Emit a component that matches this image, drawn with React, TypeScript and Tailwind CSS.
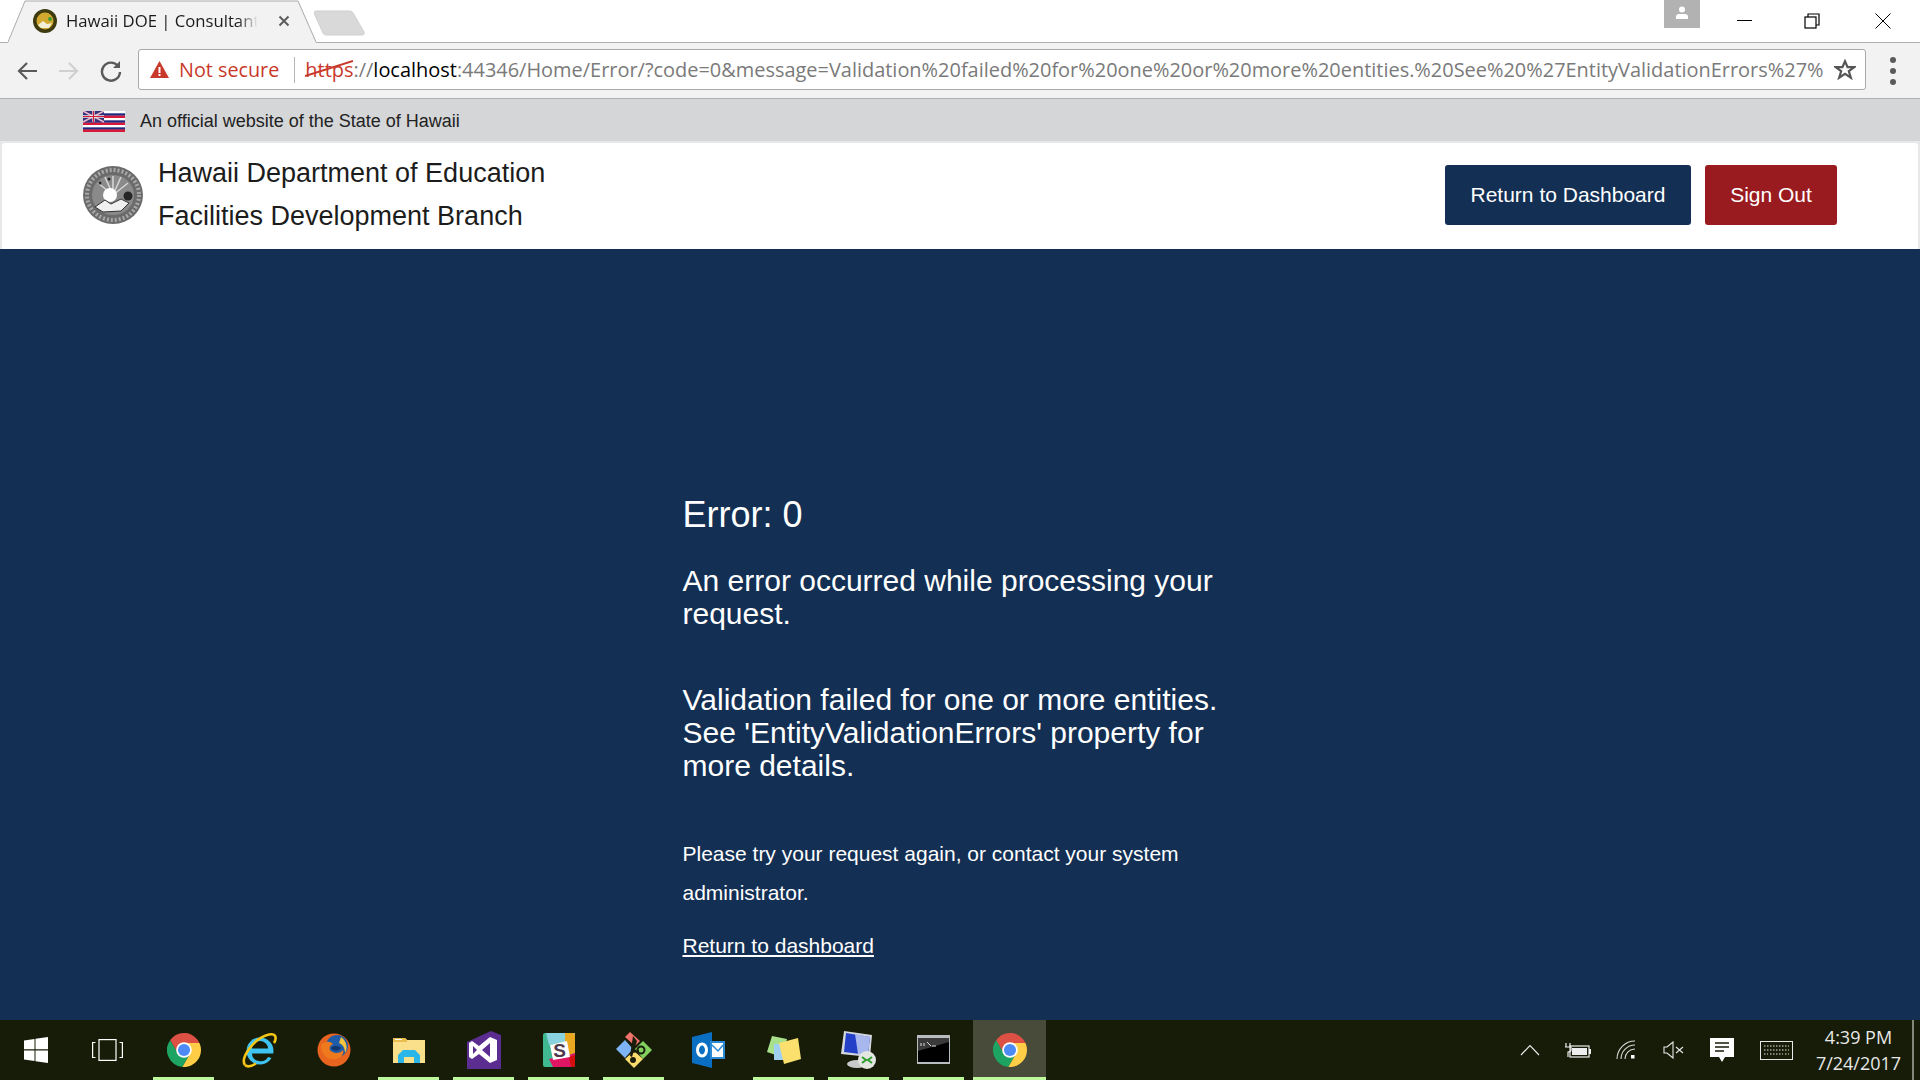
import React from 'react'

const sans = { fontFamily: '"Liberation Sans", Arial, sans-serif' }

function ChromeLogo({ size = 34 }: { size?: number }) {
    return (
        <svg width={size} height={size} viewBox="-24 -24 48 48">
            <path d="M0 -10H21.8A24 24 0 0 0 -19.56 -13.9L-8.66 5Z" fill="#dd5144" />
            <path d="M-8.66 5L-19.56 -13.9A24 24 0 0 0 -2.24 23.9L8.66 5Z" fill="#1da462" />
            <path d="M8.66 5L-2.24 23.9A24 24 0 0 0 21.8 -10H0Z" fill="#ffcd46" />
            <circle r="11" fill="#fff" />
            <circle r="8.6" fill="#4c8bf5" />
        </svg>
    )
}

function IeLogo() {
    return (
        <svg width="36" height="36" viewBox="0 0 36 36">
            <circle cx="19" cy="19" r="13.5" fill="#3ec3f2" />
            <path d="M11 16.5A8 7.5 0 0 1 27 16.5Z" fill="#161c07" />
            <path d="M11 21.5A8.5 8 0 0 0 27 25L34 27V21.5Z" fill="#161c07" />
            <path d="M4 33C-1 26 13 6 28 2.5 35 1 36 6 33 11" fill="none" stroke="#f5c518" strokeWidth="2.6" />
            <path d="M4 33C7 36 11 34 15 31.5" fill="none" stroke="#f5c518" strokeWidth="2.6" />
        </svg>
    )
}

function FirefoxLogo() {
    return (
        <svg width="34" height="34" viewBox="0 0 34 34">
            <circle cx="17" cy="17" r="16.5" fill="#e8641f" />
            <circle cx="20" cy="13" r="11" fill="#1f5ca8" />
            <path d="M24 4C30 8 31 16 28 20 28 14 25 11 22 10Z" fill="#f4c53c" />
            <path d="M4 12C4 24 14 29 22 25 26 23 27 19 26 17 23 21 16 21 13 17 12 14 14 12 16 11 13 8 8 8 4 12Z" fill="#ee7a1d" />
            <path d="M14 15C17 19 22 18 24 15 22 13 17 12 14 15Z" fill="#14366f" />
        </svg>
    )
}

function FolderLogo() {
    return (
        <svg width="32" height="28" viewBox="0 0 32 28">
            <path d="M0 2H12L14 4H32V27H0Z" fill="#fbe08c" />
            <path d="M0 2H12L14 4V6H0Z" fill="#e9bd4e" />
            <rect x="2" y="3" width="7" height="1" fill="#fff" />
            <path d="M5 27V19L10 14H22L27 19V27H21V21H11V27Z" fill="#2ab6e9" />
        </svg>
    )
}

function VsLogo() {
    return (
        <svg width="34" height="38" viewBox="0 0 34 38">
            <path d="M24 0L34 4V38H0V11Z" fill="#5c2d91" />
            <path d="M23 6L12 15 5 10 2 12V26L5 28 12 23 23 32 30 29V9Z" fill="#fff" />
            <path d="M23 12V26L15 19Z M6 15L10 19 6 23Z" fill="#5c2d91" />
        </svg>
    )
}

function SlackLogo() {
    return (
        <svg width="32" height="34" viewBox="0 0 32 34">
            <rect width="32" height="34" rx="2" fill="#3eb991" />
            <path d="M3 0H32V12L22 9 6 12Z" fill="#89d3df" />
            <path d="M22 0H30Q32 0 32 2V20L26 22 22 9Z" fill="#e9a820" />
            <path d="M6 26L26 22 32 20V32Q32 34 30 34H10Z" fill="#e01563" />
            <path d="M26 24L32 22V32Q32 34 30 34H28Z" fill="#d40e0d" />
            <path d="M7 12L24 8 27 24 10 27Z" fill="#fff" />
            <text x="16.5" y="24" textAnchor="middle" fontSize="19" fontWeight="700" fill="#4d394b" style={sans}>S</text>
        </svg>
    )
}

function GitLogo() {
    return (
        <svg width="36" height="36" viewBox="0 0 36 36">
            <path d="M0 17L9 8 17 17 9 26Z" fill="#7eb4f5" />
            <path d="M19 17L27 9 36 18 27 27Z" fill="#82d05e" />
            <path d="M9 27L18 19 27 27 18 36Z" fill="#fbdc6e" />
            <path d="M9 5L14 0 24 9 19 14Z" fill="#f0716a" />
            <path d="M17 4L21 9 16 25 14 24Z" fill="#1b1d0c" />
            <circle cx="25" cy="18" r="3.5" fill="none" stroke="#1b1d0c" strokeWidth="2" />
            <path d="M16 20L23 19" stroke="#1b1d0c" strokeWidth="2" />
            <circle cx="17" cy="28" r="3" fill="#1b1d0c" />
        </svg>
    )
}

function OutlookLogo() {
    return (
        <svg width="33" height="36" viewBox="0 0 33 36">
            <path d="M0 5L20 0V36L0 31Z" fill="#0a6fc2" />
            <ellipse cx="10" cy="18" rx="4.5" ry="6" fill="none" stroke="#fff" strokeWidth="3" />
            <rect x="18" y="9" width="15" height="18" fill="#2a8ad4" />
            <rect x="20" y="11" width="11" height="14" fill="#fff" />
            <path d="M20 13L26 19 31 13" fill="none" stroke="#2a8ad4" strokeWidth="1.5" />
        </svg>
    )
}

function StickyLogo() {
    return (
        <svg width="34" height="30" viewBox="0 0 34 30">
            <path d="M5 1L20 4 15 22 0 17Z" fill="#a8e08c" />
            <rect x="7" y="9" width="14" height="16" fill="#9fd0f2" />
            <path d="M12 8L31 3 34 24 17 29Z" fill="#fbe06d" />
        </svg>
    )
}

function RdpLogo() {
    return (
        <svg width="36" height="38" viewBox="0 0 36 38">
            <ellipse cx="16" cy="33" rx="10" ry="4" fill="#c9c9c9" />
            <path d="M3 0L31 4 29 26 0 23Z" fill="#d4d8de" />
            <path d="M5 2L29 6 27 24 3 21Z" fill="#2340c8" />
            <path d="M14 3L29 6 27 24 17 23Z" fill="#a8b8ee" />
            <circle cx="26" cy="29" r="9" fill="#e4e6e2" />
            <path d="M21 26L25 29 21 32M31 26L27 29 31 32" fill="none" stroke="#2f9e2f" strokeWidth="2" />
        </svg>
    )
}

function CmdLogo() {
    return (
        <svg width="33" height="29" viewBox="0 0 33 29">
            <rect width="33" height="29" fill="#b9bcbe" />
            <rect x="1" y="3" width="31" height="24" fill="#000" />
            <path d="M1 3H32V7L1 16Z" fill="#3a3a3a" />
            <path d="M4 8V11M7 8V11M10 7L14 11M15 11H19" stroke="#ddd" strokeWidth="1" fill="none" />
        </svg>
    )
}

function Seal() {
    return (
        <svg width="60" height="58" viewBox="0 0 60 58">
            <ellipse cx="30" cy="29" rx="30" ry="29" fill="#6b6b6b" />
            <ellipse cx="30" cy="29" rx="26" ry="25" fill="none" stroke="#a8a8a8" strokeWidth="4" strokeDasharray="2 2" />
            <ellipse cx="30" cy="29" rx="21" ry="20" fill="#8a8a8a" />
            <path d="M30 29V10M30 29L22 11M30 29L38 11M30 29L15 17M30 29L45 17" stroke="#d4d4d4" strokeWidth="1.6" />
            <circle cx="27" cy="29" r="7" fill="#fff" />
            <path d="M12 41L22 34 28 38 38 33 46 37 38 45 20 46Z" fill="#f0f0f0" stroke="#333" strokeWidth="1" />
            <circle cx="45" cy="30" r="4.5" fill="#262626" />
            <circle cx="17" cy="17" r="1.5" fill="#262626" />
            <circle cx="26" cy="13" r="1.5" fill="#262626" />
        </svg>
    )
}

function HawaiiFlag() {
    const stripes = ['#ffffff', '#1f2a80', '#d8193a', '#ffffff', '#1f2a80', '#d8193a', '#ffffff', '#1f2a80', '#d8193a']
    return (
        <svg width="42" height="21" viewBox="0 0 42 21">
            {stripes.map((color, i) => (
                <rect key={i} y={i * 2.34} width="42" height="2.4" fill={color} />
            ))}
            <rect y="18.6" width="42" height="2.4" fill="#d8193a" />
            <rect width="21" height="11" fill="#34307c" />
            <path d="M0 0L21 11M21 0L0 11" stroke="#e8b8c8" strokeWidth="1.6" />
            <path d="M10.5 0V11M0 5.5H21" stroke="#eee" strokeWidth="2.4" />
            <path d="M10.5 0V11M0 5.5H21" stroke="#d8193a" strokeWidth="1.2" />
        </svg>
    )
}

function Favicon() {
    return (
        <svg width="24" height="24" viewBox="0 0 24 24">
            <circle cx="12" cy="12" r="12" fill="#3d3a10" />
            <circle cx="12" cy="12" r="8.5" fill="#d2a92e" />
            <circle cx="17" cy="10" r="2" fill="#3f9a3a" />
            <path d="M5 16L10 12 14 15 19 14 16 19 8 19Z" fill="#f1efd8" />
        </svg>
    )
}

function TabStrip() {
    return (
        <div className="flex h-[42px] bg-white">
            <div className="relative ml-[8px] flex h-[42px] w-[310px] items-center">
                <svg className="absolute inset-0" width="310" height="43" viewBox="0 0 310 43">
                    <path d="M0 43L17 1H290L308 43Z" fill="#f2f2f2" />
                    <path d="M0 42L17 1H290L308 42" fill="none" stroke="#a9a9a9" />
                </svg>
                <div className="relative ml-[25px] flex items-center">
                    <Favicon />
                    <span
                        className="ml-[9px] w-[192px] text-[16.7px] whitespace-nowrap text-[#1b1b1b]"
                        style={{ fontFamily: '"Open Sans", sans-serif', maskImage: 'linear-gradient(90deg, #000 172px, transparent 192px)' }}
                    >
                        Hawaii DOE | Consultant
                    </span>
                    <svg className="ml-[20px]" width="12" height="12" viewBox="0 0 12 12">
                        <path d="M1.5 1.5L10.5 10.5M10.5 1.5L1.5 10.5" stroke="#5c5c5c" strokeWidth="2" />
                    </svg>
                </div>
            </div>
            <svg className="mt-[10px] -ml-[4px]" width="52" height="26" viewBox="0 0 52 26">
                <path d="M2 1H36Q38 1 39 3L50 22Q51 25 48 25H12Q10 25 9 23L0 3Q0 1 2 1Z" fill="#d9d9d9" stroke="#cfcfcf" />
            </svg>
            <div className="ml-auto flex h-[28px]">
                <div className="flex h-[28px] w-[36px] items-start justify-center bg-[#b2b2b2] pt-[6px]">
                    <svg width="14" height="14" viewBox="0 0 14 14">
                        <circle cx="7" cy="3.5" r="3" fill="#fff" />
                        <path d="M1 13V10.5Q1 8.5 4 8H10Q13 8.5 13 10.5V13Z" fill="#fff" />
                    </svg>
                </div>
                <div className="flex w-[88px] justify-center pt-[20px]">
                    <div className="h-px w-[15px] bg-black" />
                </div>
                <div className="flex w-[48px] justify-center pt-[13px]">
                    <svg width="16" height="16" viewBox="0 0 16 16" fill="none" stroke="#000" strokeWidth="1.2">
                        <rect x="1" y="4" width="11" height="11" />
                        <path d="M4 4V1H15V12H12" />
                    </svg>
                </div>
                <div className="flex w-[84px] justify-center pt-[13px] pl-[10px]">
                    <svg width="16" height="16" viewBox="0 0 16 16">
                        <path d="M0.5 0.5L15.5 15.5M15.5 0.5L0.5 15.5" stroke="#000" strokeWidth="1" />
                    </svg>
                </div>
            </div>
        </div>
    )
}

function Toolbar() {
    return (
        <div className="flex h-[57px] items-center border-y border-[#b0b0b0] bg-[#f2f2f2]">
            <div className="flex w-[138px] items-center">
                <svg className="ml-[16px]" width="22" height="22" viewBox="0 0 22 22" fill="none" stroke="#5a5a5a" strokeWidth="2.2">
                    <path d="M21 11H3M11 3L3 11 11 19" />
                </svg>
                <svg className="ml-[20px]" width="22" height="22" viewBox="0 0 22 22" fill="none" stroke="#d0d0d0" strokeWidth="2.2">
                    <path d="M1 11H19M11 3L19 11 11 19" />
                </svg>
                <svg className="ml-[20px]" width="22" height="22" viewBox="0 0 22 22" fill="none" stroke="#5a5a5a" strokeWidth="2.4">
                    <path d="M18 6A9 9 0 1 0 20 12" />
                    <path d="M20 1V8H13" fill="#5a5a5a" stroke="none" />
                </svg>
            </div>
            <div
                className="mb-[2px] flex h-[41px] w-[1728px] items-center rounded-[3px] border border-[#a9a9a9] bg-white text-[19.8px]"
                style={{ fontFamily: '"Open Sans", sans-serif' }}
            >
                <svg className="ml-[11px]" width="19" height="17" viewBox="0 0 19 17">
                    <path d="M9.5 0L19 17H0Z" fill="#c9392b" />
                    <rect x="8.5" y="6" width="2" height="6" fill="#fff" />
                    <rect x="8.5" y="13" width="2" height="2" fill="#fff" />
                </svg>
                <span className="ml-[10px] whitespace-nowrap text-[#c9392b]">Not secure</span>
                <div className="ml-[15px] h-[26px] w-px bg-[#b5b5b5]" />
                <div className="relative ml-[10px] w-[1516px] text-[19.95px] whitespace-nowrap text-[#7a7a7a]">
                    <span className="text-[#c9392b]">https</span>
                    <span>://</span>
                    <span className="text-black">localhost</span>
                    <span>:44346/Home/Error/?code=0&amp;message=Validation%20failed%20for%20one%20or%20more%20entities.%20See%20%27EntityValidationErrors%27%</span>
                    <svg className="absolute top-[3px] left-0" width="48" height="22" viewBox="0 0 48 22">
                        <path d="M0 18L48 3" stroke="#c9392b" strokeWidth="2" />
                    </svg>
                </div>
                <svg className="ml-[13px]" width="22" height="21" viewBox="0 0 24 23" fill="none" stroke="#555" strokeWidth="2.4">
                    <path d="M12 2.5L14.8 9H22L16.2 13.4 18.4 20.5 12 16.3 5.6 20.5 7.8 13.4 2 9H9.2Z" />
                </svg>
            </div>
            <div className="ml-[24px] flex flex-col gap-[5px]">
                <div className="size-[6px] rounded-full bg-[#5a5a5a]" />
                <div className="size-[6px] rounded-full bg-[#5a5a5a]" />
                <div className="size-[6px] rounded-full bg-[#5a5a5a]" />
            </div>
        </div>
    )
}

function TaskSlot({ children, open }: { children?: React.ReactNode; open?: boolean }) {
    return (
        <div className="relative flex h-[60px] w-[75px] items-center justify-center">
            <div className="-mt-[1px] flex items-center justify-center">{children}</div>
            {open && <div className="absolute right-[7px] bottom-0 left-[7px] h-[3px] bg-[#bdf99c]" />}
        </div>
    )
}

function Taskbar() {
    return (
        <div className="flex h-[60px] shrink-0 bg-[#161c07] text-[#e8e8e8]">
            <div className="flex w-[71px] items-center justify-center">
                <svg width="24" height="26" viewBox="0 0 24 26" fill="#fff">
                    <path d="M0 3.5L10.5 2V12.3H0Z M11.5 1.8L24 0V12.3H11.5Z M0 13.5H10.5V24L0 22.5Z M11.5 13.5H24V26L11.5 24.2Z" />
                </svg>
            </div>
            <div className="flex w-[75px] items-center justify-center pr-[2px]">
                <svg width="31" height="22" viewBox="0 0 31 22" fill="none" stroke="#fff" strokeWidth="1.2">
                    <rect x="7" y="0.6" width="17" height="20.8" />
                    <path d="M3.5 3.5H0.6V18.5H3.5M27.5 3.5H30.4V18.5H27.5" />
                </svg>
            </div>
            <TaskSlot open><ChromeLogo /></TaskSlot>
            <TaskSlot><IeLogo /></TaskSlot>
            <TaskSlot><FirefoxLogo /></TaskSlot>
            <TaskSlot open><FolderLogo /></TaskSlot>
            <TaskSlot open><VsLogo /></TaskSlot>
            <TaskSlot open><SlackLogo /></TaskSlot>
            <TaskSlot open><GitLogo /></TaskSlot>
            <TaskSlot><OutlookLogo /></TaskSlot>
            <TaskSlot open><StickyLogo /></TaskSlot>
            <TaskSlot open><RdpLogo /></TaskSlot>
            <TaskSlot open><CmdLogo /></TaskSlot>

            {/* active window */}
            <div className="relative ml-[2px] flex h-[60px] w-[73px] items-center justify-center bg-[#484b3a]">
                <div className="-mt-[1px] flex"><ChromeLogo /></div>
                <div className="absolute right-0 bottom-0 left-0 h-[3px] bg-[#bdf99c]" />
            </div>

            <div className="ml-auto flex items-center">
                <div className="flex w-[48px] justify-center">
                    <svg width="20" height="12" viewBox="0 0 20 12" fill="none" stroke="#e8e8e8" strokeWidth="1.2">
                        <path d="M1 11L10 1.5 19 11" />
                    </svg>
                </div>
                <div className="flex w-[48px] justify-center">
                    <svg width="26" height="16" viewBox="0 0 26 16" fill="none" stroke="#eee" strokeWidth="1.2">
                        <path d="M1 1V5M5 1V5M0 5H6V8Q6 10 3 10V15" />
                        <rect x="5" y="4" width="19" height="11" />
                        <rect x="7" y="6" width="15" height="7" fill="#eee" stroke="none" />
                        <rect x="24" y="7" width="2" height="5" fill="#eee" stroke="none" />
                    </svg>
                </div>
                <div className="flex w-[48px] justify-center">
                    <svg width="20" height="20" viewBox="0 0 20 20" fill="none" stroke="#d8d8d8" strokeWidth="1.1">
                        <path d="M1 19A18 18 0 0 1 19 1M5 19A14 14 0 0 1 19 5M9 19A10 10 0 0 1 19 9" />
                        <rect x="15" y="15" width="3.5" height="3.5" fill="#fff" stroke="none" />
                    </svg>
                </div>
                <div className="flex w-[47px] justify-center">
                    <svg width="21" height="18" viewBox="0 0 21 18" fill="none" stroke="#e8e8e8" strokeWidth="1.1">
                        <path d="M1 6H4L10 1V17L4 12H1Z M13 6L20 12M20 6L13 12" />
                    </svg>
                </div>
                <div className="flex w-[50px] justify-center">
                    <svg width="24" height="24" viewBox="0 0 24 24">
                        <path d="M0 0H24V19H15L12 24 9 19H0Z" fill="#fff" />
                        <path d="M5 5H19M5 9H19M5 13H14" stroke="#161c07" strokeWidth="1.4" />
                    </svg>
                </div>
                <div className="flex w-[58px] justify-center">
                    <svg width="33" height="19" viewBox="0 0 33 19" fill="none" stroke="#e8e8e8" strokeWidth="1">
                        <rect x="0.5" y="0.5" width="32" height="18" />
                        <path d="M4 5H29M4 9H29M4 13H8M10 13H23M25 13H29" strokeDasharray="1.5 1.5" />
                    </svg>
                </div>
                <div
                    className="-mt-[1px] flex w-[107px] flex-col items-center text-[18px] leading-[26px] text-[#e8e8e8]"
                    style={{ fontFamily: '"Open Sans", sans-serif' }}
                >
                    <span>4:39 PM</span>
                    <span>7/24/2017</span>
                </div>
                <div className="h-[60px] w-[2px] bg-[#85877a]" />
                <div className="w-[6px]" />
            </div>
        </div>
    )
}

export default function App() {
    return (
        <div className="flex h-screen flex-col overflow-hidden bg-white" style={sans}>
            <TabStrip />
            <Toolbar />

            {/* State banner */}
            <div className="flex h-[42px] shrink-0 items-center bg-[#d5d6d8] pt-[2px] pl-[83px] text-[18px] text-[#222]">
                <HawaiiFlag />
                <span className="ml-[15px]">An official website of the State of Hawaii</span>
            </div>

            {/* Site header */}
            <div className="shrink-0 bg-[#e8e8e9] px-[2px] pt-[2px]">
                <div className="flex h-[106px] items-center rounded-t-[3px] bg-white pr-[81px] pb-[2px] pl-[81px]">
                    <Seal />
                    <div className="ml-[15px] text-[27px] leading-[43px] text-[#1c1c1c]">
                        <div>Hawaii Department of Education</div>
                        <div>Facilities Development Branch</div>
                    </div>
                    <div className="ml-auto flex gap-[14px] text-[21px] text-white">
                        <button className="h-[60px] w-[246px] rounded-[3px] bg-[#132f53]">Return to Dashboard</button>
                        <button className="h-[60px] w-[132px] rounded-[3px] bg-[#991b1f]">Sign Out</button>
                    </div>
                </div>
            </div>

            {/* Error content */}
            <main className="flex-1 bg-[#132f53] pt-[246px] pl-[682.5px] text-white">
                <div className="w-[545px]">
                    <h1 className="text-[36px] leading-[40px]">Error: 0</h1>
                    <h2 className="mt-[29px] text-[30px] leading-[33px]">An error occurred while processing your request.</h2>
                    <h2 className="mt-[53px] text-[30px] leading-[33px]">Validation failed for one or more entities. See 'EntityValidationErrors' property for more details.</h2>
                    <p className="mt-[52px] text-[21px] leading-[39px]">Please try your request again, or contact your system administrator.</p>
                    <a className="mt-[20px] block text-[21px] leading-[28px] underline">Return to dashboard</a>
                </div>
            </main>

            <Taskbar />
        </div>
    )
}
